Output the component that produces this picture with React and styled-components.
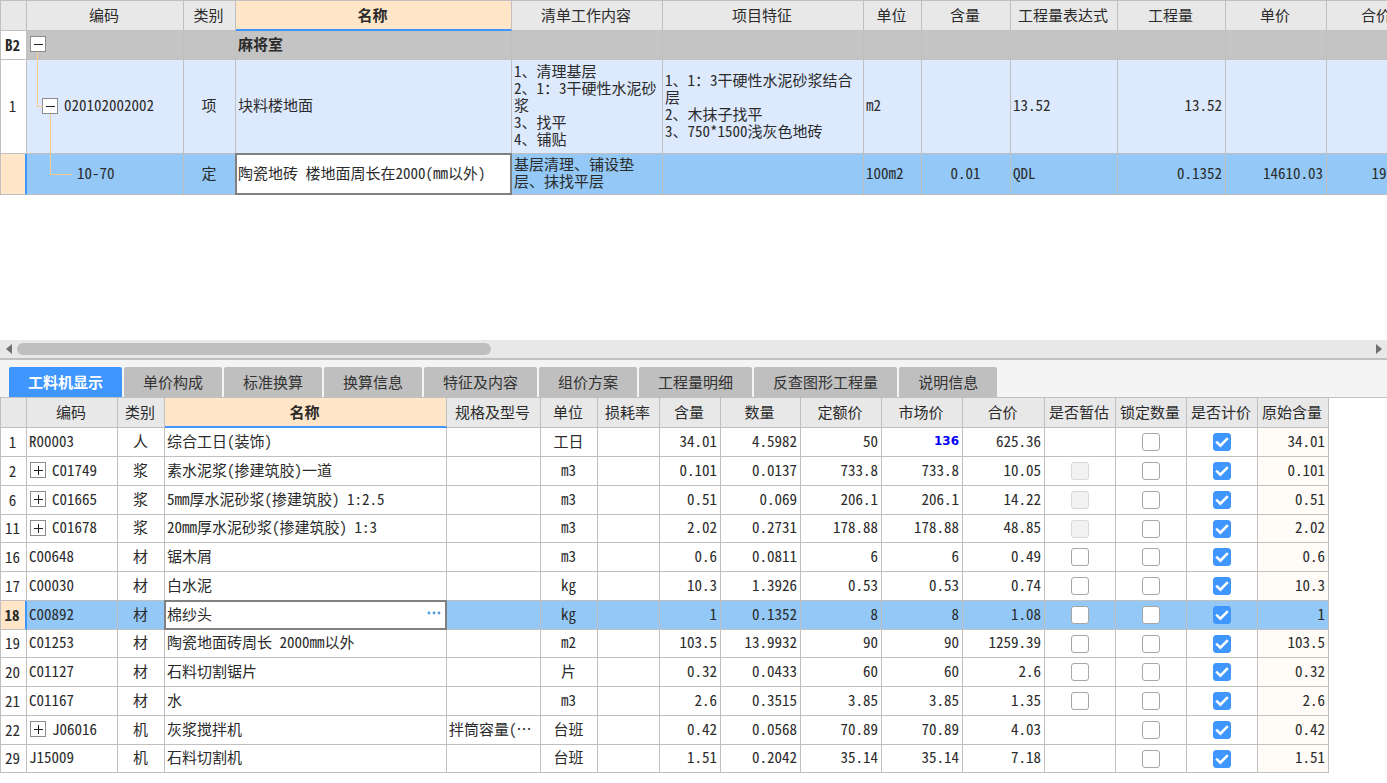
import React, { useState } from "react";
import styled, { createGlobalStyle, css } from "styled-components";

const line = "#c0c0c0";
const blue = "#4096ff";

const obraColumns = [
  { name: "", width: 26 },
  { name: "编码", width: 157 },
  { name: "类别", width: 52 },
  { name: "名称", width: 276, active: true },
  { name: "清单工作内容", width: 151 },
  { name: "项目特征", width: 201 },
  { name: "单位", width: 58 },
  { name: "含量", width: 89 },
  { name: "工程量表达式", width: 107 },
  { name: "工程量", width: 108 },
  { name: "单价", width: 101 },
  { name: "合价", width: 101 },
];

const materialColumns = [
  { name: "", width: 26 },
  { name: "编码", width: 91 },
  { name: "类别", width: 47 },
  { name: "名称", width: 282, active: true },
  { name: "规格及型号", width: 94 },
  { name: "单位", width: 57 },
  { name: "损耗率", width: 62 },
  { name: "含量", width: 61 },
  { name: "数量", width: 80 },
  { name: "定额价", width: 81 },
  { name: "市场价", width: 81 },
  { name: "合价", width: 82 },
  { name: "是否暂估", width: 71 },
  { name: "锁定数量", width: 71 },
  { name: "是否计价", width: 71 },
  { name: "原始含量", width: 71 },
];

const tabs = [
  "工料机显示",
  "单价构成",
  "标准换算",
  "换算信息",
  "特征及内容",
  "组价方案",
  "工程量明细",
  "反查图形工程量",
  "说明信息",
];

// estimate: "off" = empty box, "disabled" = greyed box, undefined = no box
const materials = [
  { no: 1, code: "R00003", type: "人", name: "综合工日(装饰)", unit: "工日", content: "34.01", qty: "4.5982", base: "50", market: "136", changed: true, total: "625.36" },
  { no: 2, code: "C01749", group: true, type: "浆", name: "素水泥浆(掺建筑胶)一道", unit: "m3", content: "0.101", qty: "0.0137", base: "733.8", market: "733.8", total: "10.05", estimate: "disabled" },
  { no: 6, code: "C01665", group: true, type: "浆", name: "5mm厚水泥砂浆(掺建筑胶) 1:2.5", unit: "m3", content: "0.51", qty: "0.069", base: "206.1", market: "206.1", total: "14.22", estimate: "disabled" },
  { no: 11, code: "C01678", group: true, type: "浆", name: "20mm厚水泥砂浆(掺建筑胶) 1:3", unit: "m3", content: "2.02", qty: "0.2731", base: "178.88", market: "178.88", total: "48.85", estimate: "disabled" },
  { no: 16, code: "C00648", type: "材", name: "锯木屑", unit: "m3", content: "0.6", qty: "0.0811", base: "6", market: "6", total: "0.49", estimate: "off" },
  { no: 17, code: "C00030", type: "材", name: "白水泥", unit: "kg", content: "10.3", qty: "1.3926", base: "0.53", market: "0.53", total: "0.74", estimate: "off" },
  { no: 18, code: "C00892", type: "材", name: "棉纱头", unit: "kg", content: "1", qty: "0.1352", base: "8", market: "8", total: "1.08", estimate: "off", selected: true },
  { no: 19, code: "C01253", type: "材", name: "陶瓷地面砖周长 2000mm以外", unit: "m2", content: "103.5", qty: "13.9932", base: "90", market: "90", total: "1259.39", estimate: "off" },
  { no: 20, code: "C01127", type: "材", name: "石料切割锯片", unit: "片", content: "0.32", qty: "0.0433", base: "60", market: "60", total: "2.6", estimate: "off" },
  { no: 21, code: "C01167", type: "材", name: "水", unit: "m3", content: "2.6", qty: "0.3515", base: "3.85", market: "3.85", total: "1.35", estimate: "off" },
  { no: 22, code: "J06016", group: true, type: "机", name: "灰浆搅拌机", spec: "拌筒容量(…", unit: "台班", content: "0.42", qty: "0.0568", base: "70.89", market: "70.89", total: "4.03" },
  { no: 29, code: "J15009", type: "机", name: "石料切割机", unit: "台班", content: "1.51", qty: "0.2042", base: "35.14", market: "35.14", total: "7.18" },
];

const Columns = ({ columns }) => (
  <>
    <colgroup>
      {columns.map((column, i) => (
        <Col key={i} $width={column.width} />
      ))}
    </colgroup>
    <thead>
      <tr>
        {columns.map((column, i) => (
          <HeadCell key={i} scope="col" $active={column.active}>
            {column.name}
          </HeadCell>
        ))}
      </tr>
    </thead>
  </>
);

const Toggle = ({ open, label }) => (
  <ToggleButton type="button" aria-label={label} aria-expanded={open}>
    <svg width="14" height="14" viewBox="0 0 14 14" stroke="#222" strokeWidth="1">
      <path d={open ? "M3 7.5H12" : "M3 7.5H12M7.5 3V12"} />
    </svg>
  </ToggleButton>
);

const Check = ({ label, initial = false, disabled = false }) => {
  const [checked, setChecked] = useState(initial);
  return (
    <CheckLabel>
      <CheckInput
        type="checkbox"
        aria-label={label}
        checked={checked}
        disabled={disabled}
        onChange={() => setChecked(!checked)}
      />
      {checked && (
        <svg width="18" height="18" viewBox="0 0 18 18" fill="none" stroke="#fff" strokeWidth="2.6">
          <path d="M3.2 8.6L7.4 12.6L14.8 5.2" />
        </svg>
      )}
    </CheckLabel>
  );
};

const ObraTable = () => {
  const [name, setName] = useState("陶瓷地砖 楼地面周长在2000(mm以外)");
  return (
    <TopPane>
      <Table>
        <Columns columns={obraColumns} />
        <tbody>
          <Row $height={29} $tone="section">
            <NumberCell $bold>B2</NumberCell>
            <Cell>
              <CodeWrap>
                <Toggle open label="麻将室" />
              </CodeWrap>
            </Cell>
            <Cell />
            <Cell $bold>麻将室</Cell>
            <Cell />
            <Cell />
            <Cell />
            <Cell />
            <Cell />
            <Cell />
            <Cell />
            <Cell />
          </Row>
          <Row $height={94} $tone="item">
            <NumberCell>1</NumberCell>
            <TreeCell $indent={14} $left={10} $rise={8} $drop={54} $reach={5}>
              <CodeWrap>
                <Toggle open label="020102002002" />
                020102002002
              </CodeWrap>
            </TreeCell>
            <Cell $align="center">项</Cell>
            <Cell>块料楼地面</Cell>
            <Cell $wrap>{"1、清理基层\n2、1：3干硬性水泥砂浆\n3、找平\n4、铺贴"}</Cell>
            <Cell $wrap>{"1、1：3干硬性水泥砂浆结合层\n2、木抹子找平\n3、750*1500浅灰色地砖"}</Cell>
            <Cell>m2</Cell>
            <Cell />
            <Cell>13.52</Cell>
            <Cell $align="right">13.52</Cell>
            <Cell />
            <Cell />
          </Row>
          <Row $height={41} $tone="selected">
            <NumberCell $selected />
            <TreeCell $indent={50} $left={23} $rise={40} $drop={60} $reach={21}>
              10-70
            </TreeCell>
            <Cell $align="center">定</Cell>
            <Cell>
              <Editor>
                <EditorInput
                  aria-label="名称"
                  value={name}
                  onChange={(e) => setName(e.target.value)}
                />
              </Editor>
            </Cell>
            <Cell $wrap>基层清理、铺设垫层、抹找平层</Cell>
            <Cell />
            <Cell>100m2</Cell>
            <Cell $align="center">0.01</Cell>
            <Cell>QDL</Cell>
            <Cell $align="right">0.1352</Cell>
            <Cell $align="right">14610.03</Cell>
            <Cell $align="right">1975.28</Cell>
          </Row>
        </tbody>
      </Table>
    </TopPane>
  );
};

const MaterialTable = () => {
  const [name, setName] = useState("棉纱头");
  return (
    <BottomPane>
      <Table $noTop>
        <Columns columns={materialColumns} />
        <MaterialBody>
          {materials.map((item) => (
            <Row key={item.no} $tone={item.selected ? "selected" : "plain"}>
              <NumberCell $selected={item.selected} $bold={item.selected}>
                {item.no}
              </NumberCell>
              <Cell>
                <CodeWrap>
                  {item.group && <Toggle open={false} label={item.code} />}
                  {item.code}
                </CodeWrap>
              </Cell>
              <Cell $align="center">{item.type}</Cell>
              <Cell>
                {item.selected ? (
                  <Editor>
                    <EditorInput
                      aria-label="名称"
                      value={name}
                      onChange={(e) => setName(e.target.value)}
                    />
                    <MoreButton type="button" aria-label="选择">
                      <svg width="14" height="4" viewBox="0 0 14 4" fill="#4a9be0">
                        <circle cx="2" cy="2" r="1.4" />
                        <circle cx="7" cy="2" r="1.4" />
                        <circle cx="12" cy="2" r="1.4" />
                      </svg>
                    </MoreButton>
                  </Editor>
                ) : (
                  item.name
                )}
              </Cell>
              <Cell>{item.spec}</Cell>
              <Cell $align="center">{item.unit}</Cell>
              <Cell />
              <Cell $align="right">{item.content}</Cell>
              <Cell $align="right">{item.qty}</Cell>
              <Cell $align="right">{item.base}</Cell>
              <Cell $align="right">
                {item.changed ? <Changed>{item.market}</Changed> : item.market}
              </Cell>
              <Cell $align="right">{item.total}</Cell>
              <CheckCell>
                {item.estimate && (
                  <Check label={`是否暂估 ${item.code}`} disabled={item.estimate === "disabled"} />
                )}
              </CheckCell>
              <CheckCell>
                <Check label={`锁定数量 ${item.code}`} />
              </CheckCell>
              <CheckCell>
                <Check label={`是否计价 ${item.code}`} initial />
              </CheckCell>
              <Cell $align="right" $tint={!item.selected}>
                {item.content}
              </Cell>
            </Row>
          ))}
        </MaterialBody>
      </Table>
    </BottomPane>
  );
};

const App = () => {
  const [tab, setTab] = useState(tabs[0]);
  return (
    <Page>
      <GlobalStyle />
      <ObraTable />
      <ScrollBar>
        <ArrowButton type="button" aria-label="向左">
          <svg width="6" height="10" viewBox="0 0 6 10" fill="#707070">
            <path d="M6 0V10L0 5Z" />
          </svg>
        </ArrowButton>
        <Track>
          <Thumb />
        </Track>
        <ArrowButton type="button" aria-label="向右">
          <svg width="6" height="10" viewBox="0 0 6 10" fill="#707070">
            <path d="M0 0V10L6 5Z" />
          </svg>
        </ArrowButton>
      </ScrollBar>
      <TabStrip role="tablist">
        {tabs.map((name) => (
          <Tab
            key={name}
            type="button"
            role="tab"
            aria-selected={tab === name}
            $active={tab === name}
            onClick={() => setTab(name)}
          >
            {name}
          </Tab>
        ))}
      </TabStrip>
      <MaterialTable />
    </Page>
  );
};

export default App;

const GlobalStyle = createGlobalStyle`
  * {
    box-sizing: border-box;
  }

  body {
    margin: 0;
    background: #fff;
    color: #2b2b2b;
    font-family: "Noto Sans Mono CJK SC", "Noto Sans CJK SC", monospace;
    font-size: 15px;
    line-height: 17px;
  }

  button, input {
    font: inherit;
    color: inherit;
    margin: 0;
    padding: 0;
    border: none;
  }
`;

const Page = styled.main`
  display: flex;
  flex-direction: column;
  min-height: 100vh;
  overflow: hidden;
`;

const TopPane = styled.section`
  height: 340px;
  overflow: hidden;
`;

const BottomPane = styled.section`
  flex: 1;
  overflow: hidden;
`;

const Table = styled.table`
  width: min-content;
  table-layout: fixed;
  border-collapse: separate;
  border-spacing: 0;
  border-left: 1px solid ${line};
  border-top: ${(p) => (p.$noTop ? "none" : `1px solid ${line}`)};
`;

const Col = styled.col`
  width: ${(p) => p.$width}px;
`;

const HeadCell = styled.th`
  height: 30px;
  padding: 0 2px 2px 0;
  background: #e8e8e8;
  border-right: 1px solid ${line};
  border-bottom: 1px solid ${line};
  font-weight: 400;
  text-align: center;
  white-space: nowrap;

  ${(p) =>
    p.$active &&
    css`
      background: #ffe6c8;
      border-bottom: 2px solid ${blue};
      font-weight: 700;
    `}
`;

const tones = {
  plain: "#fff",
  section: "#c4c4c4",
  item: "#dde9fd",
  selected: "#93c8f7",
};

const Row = styled.tr`
  height: ${(p) => p.$height || 29}px;
  background: ${(p) => tones[p.$tone]};
`;

const MaterialBody = styled.tbody`
  tr:nth-child(4n) {
    height: 28px;
  }
`;

const Cell = styled.td`
  position: relative;
  padding: 0 3px 4px 2px;
  border-right: 1px solid ${line};
  border-bottom: 1px solid ${line};
  background: ${(p) => (p.$tint ? "#fffbf7" : "transparent")};
  font-weight: ${(p) => (p.$bold ? 700 : 400)};
  text-align: ${(p) => p.$align || "left"};
  vertical-align: middle;
  white-space: ${(p) => (p.$wrap ? "pre-wrap" : "nowrap")};
  text-spacing-trim: space-all;

  ${(p) =>
    p.$wrap &&
    css`
      padding-right: 0;
    `}
`;

const NumberCell = styled.td`
  padding: 0 2px 2px 0;
  background: ${(p) => (p.$selected ? "#ffe6c8" : "#fff")};
  border-right: ${(p) => (p.$selected ? `2px solid ${blue}` : `1px solid ${line}`)};
  border-bottom: 1px solid ${line};
  font-weight: ${(p) => (p.$bold ? 700 : 400)};
  text-align: center;
`;

const CheckCell = styled(Cell)`
  padding: 0;
`;

// branch line that comes down from the parent row's toggle
const TreeCell = styled(Cell)`
  padding-left: ${(p) => p.$indent}px;

  &::before {
    content: "";
    position: absolute;
    z-index: 1;
    left: ${(p) => p.$left}px;
    top: -${(p) => p.$rise}px;
    width: ${(p) => p.$reach}px;
    height: ${(p) => p.$drop}px;
    border-left: 1px solid #f7cb8f;
    border-bottom: 1px solid #f7cb8f;
  }
`;

const CodeWrap = styled.div`
  display: flex;
  align-items: center;
  gap: 6px;
`;

const ToggleButton = styled.button`
  display: block;
  flex: none;
  width: 16px;
  height: 16px;
  margin: 2px 0 0 1px;
  background: #fff;
  border: 1px solid #8c8c8c;

  svg {
    display: block;
  }
`;

const Editor = styled.div`
  position: absolute;
  z-index: 1;
  inset: -1px;
  display: flex;
  align-items: center;
  padding-bottom: 4px;
  background: #fff;
  border: 2px solid #808080;
`;

const EditorInput = styled.input`
  flex: 1;
  min-width: 0;
  padding-left: 1px;
  background: transparent;
  outline: none;
`;

const MoreButton = styled.button`
  display: flex;
  align-items: center;
  justify-content: center;
  width: 22px;
  height: 20px;
  background: transparent;
`;

const Changed = styled.strong`
  color: #0000ff;
  font-family: "DejaVu Sans", sans-serif;
  font-size: 12px;
`;

const CheckLabel = styled.label`
  position: relative;
  display: block;
  width: 18px;
  height: 18px;
  margin: 0 auto;

  svg {
    position: absolute;
    inset: 0;
    pointer-events: none;
  }
`;

const CheckInput = styled.input`
  display: block;
  appearance: none;
  width: 18px;
  height: 18px;
  background: #fff;
  border: 1px solid #a6a6a6;
  border-radius: 3px;

  &:checked {
    background: ${blue};
    border-color: ${blue};
  }

  &:disabled {
    background: #f2f2f2;
    border-color: #d9d9d9;
  }
`;

const ScrollBar = styled.div`
  display: flex;
  align-items: center;
  height: 20px;
  background: #e8e8e8;
  border-bottom: 2px solid ${line};
`;

const ArrowButton = styled.button`
  display: flex;
  align-items: center;
  justify-content: center;
  width: 17px;
  height: 18px;
  background: transparent;
`;

const Track = styled.div`
  flex: 1;
`;

const Thumb = styled.div`
  width: 35%;
  height: 12px;
  border-radius: 6px;
  background: #bfbfbf;
`;

const TabStrip = styled.div`
  display: flex;
  gap: 2px;
  padding: 7px 9px 0;
  background: #f4f4f4;
  border-bottom: 1px solid ${line};
`;

const Tab = styled.button`
  height: 30px;
  padding: 0 19px 2px;
  border-radius: 2px 2px 0 0;
  background: ${(p) => (p.$active ? blue : "#bfbfbf")};
  color: ${(p) => (p.$active ? "#fff" : "#333")};
  font-weight: ${(p) => (p.$active ? 700 : 400)};
  white-space: nowrap;
`;
